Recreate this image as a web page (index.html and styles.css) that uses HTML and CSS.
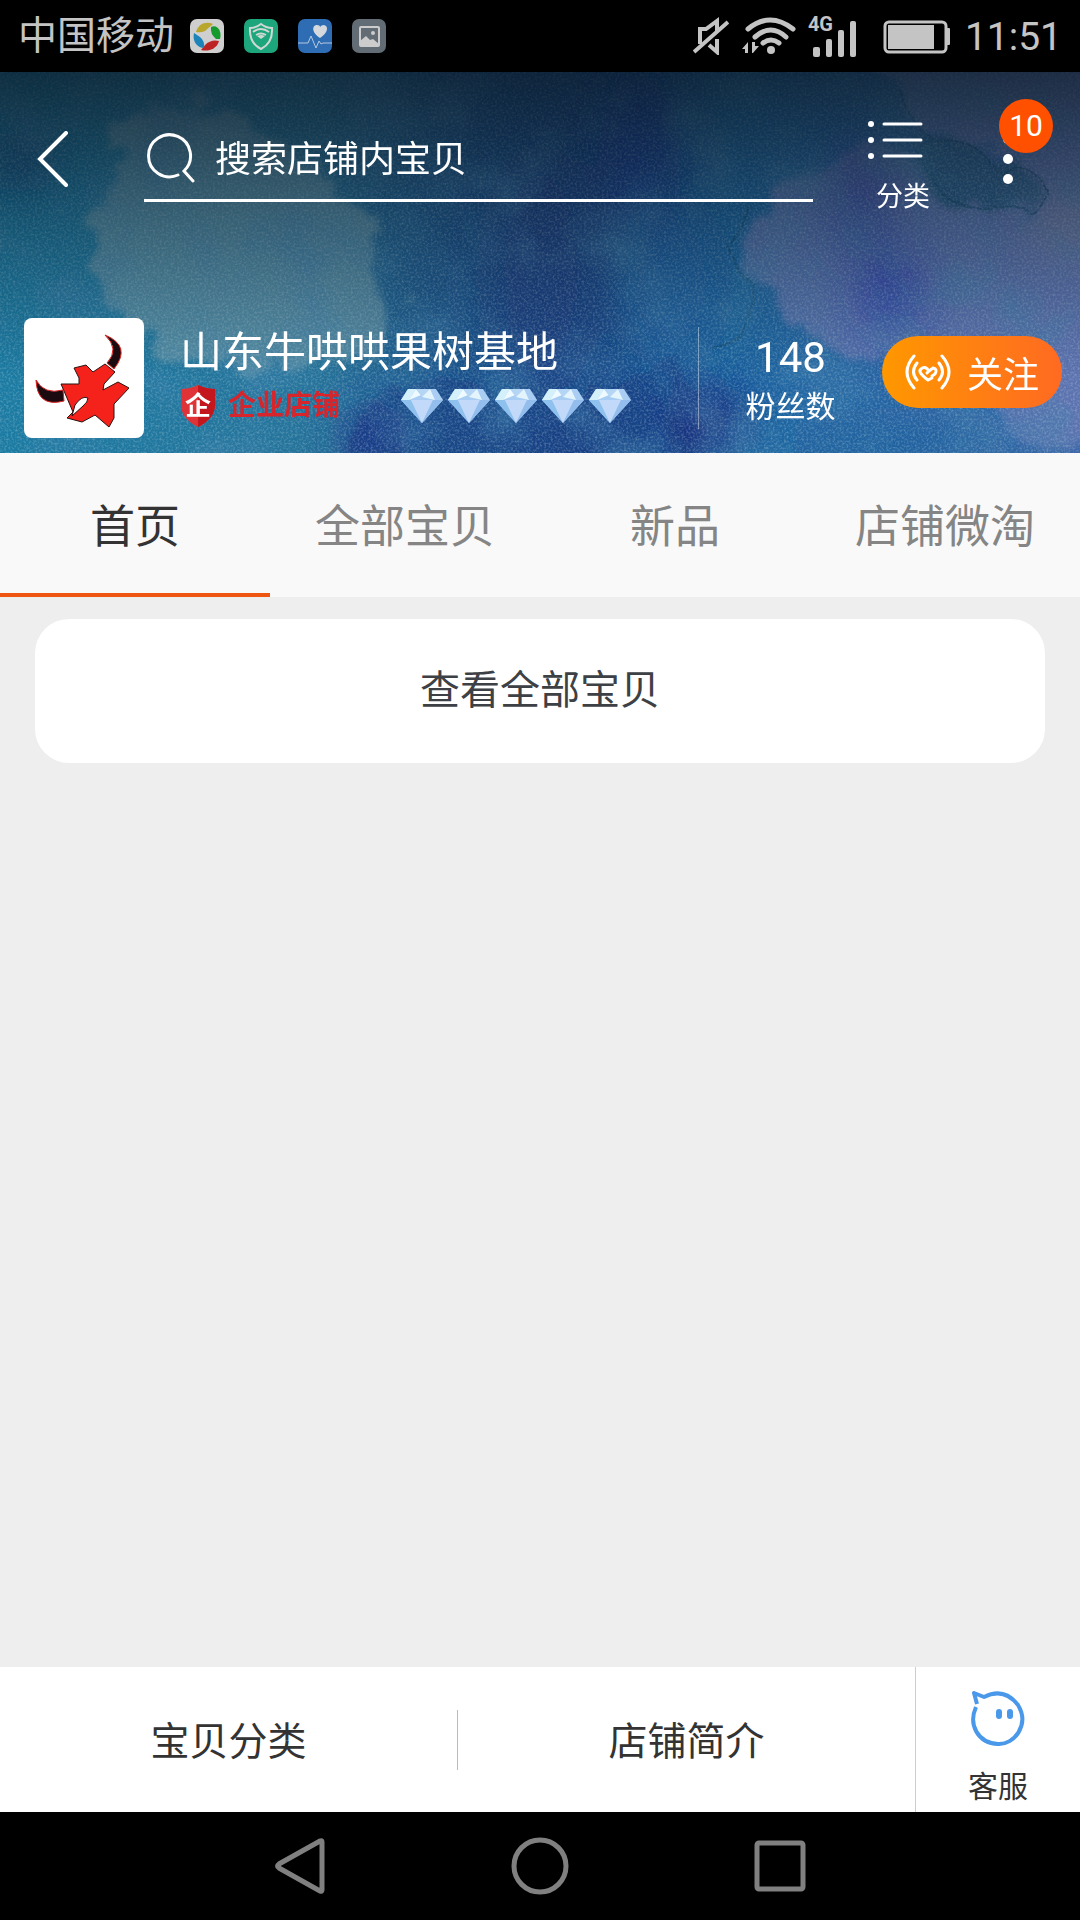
FILE: index.html
```html
<!DOCTYPE html>
<html lang="zh-CN">

<head>
    <meta charset="UTF-8" />
    <meta name="viewport" content="width=device-width, initial-scale=1.0" />
    <title>山东牛哄哄果树基地</title>
    <link rel="stylesheet" href="styles.css">
</head>

<body>
    <!-- status bar -->
    <div class="status">
        <span class="carrier">中国移动</span>
        <div class="apps">
            <svg viewBox="0 0 34 34">
                <rect width="34" height="34" rx="7" fill="#cfcfcf" />
                <path d="M6 13C8 5 16 2 23 5L15 12Q11 14 6 13Z" fill="#b9a62c" />
                <path d="M21 8C28 5 32 13 30 20L26 20Q20 15 21 8Z" fill="#159a2c" />
                <path d="M29 22C27 30 18 33 11 31L16 25Q22 20 29 22Z" fill="#bd2323" />
                <path d="M4 14C2 22 7 29 14 29Q15 22 10 18Z" fill="#1d84ba" />
            </svg>
            <svg viewBox="0 0 34 34">
                <rect width="34" height="34" rx="7" fill="#1da67b" />
                <path d="M17 5Q22 9 28 9Q29 24 17 30Q5 24 6 9Q12 9 17 5Z" fill="none" stroke="#d0d8d4" stroke-width="2" />
                <path d="M9 13Q17 7 25 13M12 16Q17 13 22 16" fill="none" stroke="#d0d8d4" stroke-width="2" />
                <path d="M13 17Q17 15 21 17L17 20Z" fill="#d0d8d4" />
            </svg>
            <svg viewBox="0 0 34 34">
                <rect width="34" height="34" rx="7" fill="#2e6db4" />
                <path d="M22 19C12 12 15 6 19 6Q22 6 22 8Q23 6 26 6C31 7 30 14 22 19Z" fill="#d5d9de" />
                <path d="M0 24H10L13 17L18 29L21 22L23 25L25 24H34" fill="none" stroke="#b5c8e0" stroke-width="1" />
            </svg>
            <svg viewBox="0 0 34 34">
                <rect width="34" height="34" rx="7" fill="#626c74" />
                <rect x="8" y="8" width="19" height="19" rx="1" fill="none" stroke="#ccc" stroke-width="2" />
                <path d="M8 22L14 17L18 21L21 20L27 25V27H8Z" fill="#ccc" />
                <circle cx="21" cy="14" r="2" fill="#ccc" />
            </svg>
        </div>
        <div class="signals">
            <svg class="mute" viewBox="0 0 36 38" fill="none" stroke="#c4c4c4" stroke-width="4">
                <path d="M7 27V12H13L24 4V14M24 22V35L16 28M1 35L35 5" />
            </svg>
            <svg class="wifi" viewBox="0 0 54 38" fill="none" stroke="#c4c4c4" stroke-width="5" stroke-linecap="round">
                <path d="M6 12Q28 -6 51 12M13 20Q29 6 44 20M21 26Q29 20 37 26" />
                <circle cx="29" cy="33" r="4" fill="#c4c4c4" stroke="none" />
                <path d="M0 32L6 25V36H3V32ZM10 25H13V29H17L11 36H10Z" fill="#c4c4c4" stroke="none" />
            </svg>
            <div class="cell">
                <span>4G</span>
                <svg viewBox="0 0 50 44" fill="#c4c4c4">
                    <rect x="5" y="33" width="7" height="10" rx="2" />
                    <rect x="18" y="25" width="6" height="18" rx="2" />
                    <rect x="30" y="16" width="6" height="27" rx="2" />
                    <rect x="42" y="7" width="6" height="36" rx="2" />
                </svg>
            </div>
            <svg class="battery" viewBox="0 0 68 34" fill="#c4c4c4">
                <rect x="2" y="2" width="61" height="30" rx="4" fill="none" stroke="#c4c4c4" stroke-width="3" />
                <rect x="5" y="5" width="46" height="24" />
                <rect x="63" y="8" width="4" height="17" rx="1" />
            </svg>
            <span class="time">11:51</span>
        </div>
    </div>

    <!-- shop header -->
    <header class="banner">
        <svg class="paint" viewBox="0 0 1080 381" preserveAspectRatio="none">
            <defs>
                <linearGradient id="base" x1="0" x2="1" y1="0" y2="0">
                    <stop offset="0" stop-color="#1b7ba3" />
                    <stop offset="0.3" stop-color="#26739b" />
                    <stop offset="0.42" stop-color="#1c568f" />
                    <stop offset="0.55" stop-color="#1a4a8a" />
                    <stop offset="0.68" stop-color="#1c66a2" />
                    <stop offset="1" stop-color="#3c65a8" />
                </linearGradient>
                <linearGradient id="shade" x1="0" x2="0" y1="0" y2="1">
                    <stop offset="0" stop-color="#08141f" stop-opacity="0.75" />
                    <stop offset="0.3" stop-color="#08141f" stop-opacity="0.45" />
                    <stop offset="0.8" stop-color="#08141f" stop-opacity="0" />
                </linearGradient>
                <filter id="edge" x="-20%" y="-20%" width="140%" height="140%">
                    <feTurbulence type="fractalNoise" baseFrequency="0.03" numOctaves="5" seed="4" />
                    <feDisplacementMap in="SourceGraphic" scale="50" xChannelSelector="R" yChannelSelector="G" />
                    <feGaussianBlur stdDeviation="3" />
                </filter>
                <filter id="vein" x="-20%" y="-20%" width="140%" height="140%">
                    <feTurbulence type="fractalNoise" baseFrequency="0.03" numOctaves="3" seed="4" />
                    <feDisplacementMap in="SourceGraphic" scale="12" xChannelSelector="R" yChannelSelector="G" />
                </filter>
                <filter id="wash" x="-50%" y="-50%" width="200%" height="200%">
                    <feGaussianBlur stdDeviation="22" />
                </filter>
                <filter id="cloud" x="0" y="0" width="100%" height="100%">
                    <feTurbulence type="fractalNoise" baseFrequency="0.015" numOctaves="5" seed="12" />
                    <feColorMatrix values="0 0 0 0 0.05  0 0 0 0 0.22  0 0 0 0 0.42  2.5 0 0 0 -1.1" />
                </filter>
                <filter id="grain" x="0" y="0" width="100%" height="100%">
                    <feTurbulence type="fractalNoise" baseFrequency="0.45" numOctaves="2" seed="8" />
                    <feColorMatrix values="0 0 0 0 0.55  0 0 0 0 0.7  0 0 0 0 0.75  1.2 0 0 0 -0.5" />
                </filter>
            </defs>
            <rect width="1080" height="381" fill="url(#base)" />
            <g filter="url(#edge)">
                <path d="M125 50L200 30L260 60L320 90L345 135L378 145L375 200L400 240L390 270L290 300L190 290L120 260L90 200L100 140Z" fill="#6797aa" opacity="0.7" />
                <path d="M880 -20L900 30L950 70L1010 80L1050 130L1030 145L960 130L900 80L850 70L780 120L745 180L755 210L790 250L840 300L880 280L1000 340L1010 381L1100 381V-20Z" fill="#6e7bb5" opacity="0.65" />
                <path d="M350 350L400 315L560 330L680 290L720 400L340 400Z" fill="#1b3780" opacity="0.5" />
                <path d="M910 60L950 72L1020 90L1045 125L1030 140L960 135L925 110Z" fill="#2d6085" opacity="0.6" />
            </g>
            <g filter="url(#wash)">
                <ellipse cx="640" cy="80" rx="40" ry="80" fill="#1c2f9a" opacity="0.5" />
                <ellipse cx="540" cy="200" rx="50" ry="120" fill="#1c3c83" opacity="0.6" />
                <ellipse cx="860" cy="130" rx="30" ry="60" fill="#3340a8" opacity="0.6" />
                <ellipse cx="890" cy="220" rx="28" ry="40" fill="#2529b0" opacity="0.7" />
                <ellipse cx="710" cy="350" rx="35" ry="35" fill="#1c1b72" opacity="0.8" />
                <ellipse cx="370" cy="365" rx="30" ry="30" fill="#1f2a85" opacity="0.7" />
                <ellipse cx="670" cy="210" rx="50" ry="80" fill="#1a66a8" opacity="0.6" />
                <ellipse cx="900" cy="370" rx="120" ry="20" fill="#20609c" opacity="0.7" />
                <ellipse cx="1070" cy="150" rx="40" ry="30" fill="#8087a3" opacity="0.6" />
                <ellipse cx="20" cy="90" rx="40" ry="30" fill="#154a80" opacity="0.7" />
            </g>
            <path d="M898 20Q920 60 940 72Q980 65 1002 105Q1030 85 1046 118Q1045 145 1025 140Q1000 130 975 138Q935 120 915 78M750 135Q745 160 725 175Q735 195 755 215Q750 270 715 278" fill="none" stroke="#174e75" stroke-width="2" opacity="0.6" filter="url(#vein)" />
            <rect width="1080" height="381" filter="url(#cloud)" opacity="0.5" />
            <rect width="1080" height="381" filter="url(#grain)" opacity="0.6" />
            <rect width="1080" height="381" fill="url(#shade)" />
        </svg>

        <div class="topbar">
            <button class="back" aria-label="返回">
                <svg viewBox="0 0 32 56" fill="none" stroke="#fff" stroke-width="4" stroke-linecap="round">
                    <path d="M29 2L3 28L29 54" />
                </svg>
            </button>
            <label class="search">
                <svg viewBox="0 0 48 50" fill="none" stroke="#fff" stroke-width="3" stroke-linecap="round">
                    <path d="M31 42A21 21 0 1 1 37 38L46 48" />
                </svg>
                <input type="text" placeholder="搜索店铺内宝贝" aria-label="搜索店铺内宝贝">
            </label>
            <button class="category">
                <svg viewBox="0 0 56 40" fill="#fff">
                    <circle cx="4" cy="4" r="3" />
                    <circle cx="4" cy="20" r="3" />
                    <circle cx="4" cy="36" r="3" />
                    <path d="M17 4H54M17 20H54M17 36H54" stroke="#fff" stroke-width="3" stroke-linecap="round" />
                </svg>
                <span>分类</span>
            </button>
            <button class="more" aria-label="更多">
                <svg viewBox="0 0 12 52" fill="#fff">
                    <circle cx="6" cy="6" r="5" />
                    <circle cx="6" cy="26" r="5" />
                    <circle cx="6" cy="46" r="5" />
                </svg>
                <span class="badge">10</span>
            </button>
        </div>

        <div class="shop">
            <svg class="logo" viewBox="0 0 120 120">
                <rect width="120" height="120" rx="8" fill="#fff" />
                <path d="M37 66L55 66L55 60L50 50L62 47L69 54L81 46L91 54L80 66L79 72L94 64L105 70L90 86L90 100L85 109L71 97L58 104L43 100L49 94Z" fill="#f5221c" stroke="#2a1210" stroke-width="1" />
                <path d="M48 98L51 87Q58 77 64 80Q64 84 59 88Z" fill="#fff" stroke="#2a1210" stroke-width="1" />
                <path d="M81 17Q108 28 90 51L83 45Q96 31 81 17Z" fill="#1b0a10" stroke="#d22" stroke-width="1" />
                <path d="M12 62Q20 77 39 72L40 83Q13 90 12 62Z" fill="#1b0a10" stroke="#d22" stroke-width="1" />
            </svg>
            <div class="info">
                <h1>山东牛哄哄果树基地</h1>
                <div class="level">
                    <div class="shield">
                        <svg viewBox="0 0 36 44">
                            <path d="M18 1Q26 5 35 5V22Q34 35 18 43Q2 35 1 22V5Q10 5 18 1Z" fill="#e03338" />
                            <path d="M18 1Q26 5 35 5V22Q34 35 18 43Z" fill="#c4161d" />
                        </svg>
                        <span>企</span>
                    </div>
                    <span class="type">企业店铺</span>
                    <div class="diamonds">
                        <svg viewBox="0 0 42 34">
                            <g id="diamond">
                                <path d="M7 0H35L42 11L21 34L0 11Z" fill="#a9cdf3" />
                                <path d="M7 0H15L8 11H0Z" fill="#d3f0fb" />
                                <path d="M15 0L20 6L8 11Z" fill="#eefaff" />
                                <path d="M15 0H29L21 8Z" fill="#b4d5f3" />
                                <path d="M29 0L34 11L21 8Z" fill="#e3f4fd" />
                                <path d="M0 11H10L21 34Z" fill="#8fc1ee" />
                                <path d="M10 11H32L21 34Z" fill="#c3d9fa" />
                                <path d="M32 11H42L21 34Z" fill="#92bdec" />
                            </g>
                        </svg>
                        <svg viewBox="0 0 42 34"><use href="#diamond" /></svg>
                        <svg viewBox="0 0 42 34"><use href="#diamond" /></svg>
                        <svg viewBox="0 0 42 34"><use href="#diamond" /></svg>
                        <svg viewBox="0 0 42 34"><use href="#diamond" /></svg>
                    </div>
                </div>
            </div>
            <div class="line"></div>
            <div class="fans">
                <span class="count">148</span>
                <span class="label">粉丝数</span>
            </div>
            <button class="follow">
                <svg viewBox="0 0 46 36" fill="none" stroke="#fff" stroke-width="3" stroke-linecap="round">
                    <path d="M9 2Q-5 18 9 34M12 9Q5 18 12 26M37 2Q51 18 37 34M34 9Q41 18 34 26" />
                    <path d="M27 24L23 26Q12 18 16 15Q20 11 24 17L28 14Q33 15 30 20L27 22M24 17L22 19" />
                </svg>
                <span>关注</span>
            </button>
        </div>
    </header>

    <nav class="tabs">
        <a href="#" class="active">首页</a>
        <a href="#">全部宝贝</a>
        <a href="#">新品</a>
        <a href="#">店铺微淘</a>
    </nav>

    <main class="content">
        <a href="#" class="all">查看全部宝贝</a>
    </main>

    <footer class="bottom">
        <a href="#" class="item">宝贝分类</a>
        <div class="split"></div>
        <a href="#" class="item">店铺简介</a>
        <a href="#" class="service">
            <svg viewBox="0 0 54 56" fill="none" stroke="#4a98ea" stroke-width="4" stroke-linejoin="round">
                <path d="M6 13L3 2L13 6Q33 -4 47 14C59 34 43 54 27 53C7 52 -3 34 5 16" />
                <path d="M28 21V25M39 21V25" stroke-width="6" stroke-linecap="round" />
            </svg>
            <span>客服</span>
        </a>
    </footer>

    <!-- android keys -->
    <div class="keys">
        <button aria-label="返回键">
            <svg viewBox="0 0 58 58"><path d="M51 5V53Q51 55 49 54L8 31Q5 29 8 27L49 4Q51 3 51 5Z" /></svg>
        </button>
        <button aria-label="主屏幕">
            <svg viewBox="0 0 58 58"><circle cx="29" cy="29" r="26" /></svg>
        </button>
        <button aria-label="最近任务">
            <svg viewBox="0 0 58 58"><rect x="6" y="6" width="46" height="46" rx="2" /></svg>
        </button>
    </div>
</body>

</html>
```

FILE: styles.css
```css
* {
    box-sizing: border-box;
}

body {
    margin: 0;
    min-height: 100vh;
    display: flex;
    flex-direction: column;
    background-color: #eee;
    font-family: Roboto, "Noto Sans CJK SC", sans-serif;
}

button {
    padding: 0;
    border: none;
    background: none;
    color: white;
    font-family: inherit;
    cursor: pointer;
}

a {
    text-decoration: none;
}

svg {
    display: block;
    flex-shrink: 0;
}

/* status bar */
.status {
    height: 72px;
    padding: 0 18px;
    display: flex;
    align-items: center;
    background-color: black;
    color: #c4c4c4;
}

.carrier {
    font-size: 39px;
    line-height: 72px;
}

.apps {
    display: flex;
    gap: 20px;
    margin-left: 16px;
}

.apps svg {
    width: 34px;
    height: 34px;
}

.signals {
    display: flex;
    align-items: center;
    margin-left: auto;
}

.mute {
    width: 36px;
    height: 38px;
    margin-right: 13px;
}

.wifi {
    width: 54px;
    height: 38px;
    margin-right: 12px;
}

.cell {
    display: grid;
    margin-right: 25px;
}

.cell > * {
    grid-area: 1 / 1;
}

.cell span {
    font-size: 20px;
    font-weight: bold;
    line-height: 20px;
}

.cell svg {
    width: 50px;
    height: 44px;
}

.battery {
    width: 68px;
    height: 34px;
    margin: 2px 14px 0 0;
}

.time {
    padding-top: 2px;
    font-size: 39px;
}

/* banner */
.banner {
    position: relative;
    min-height: 381px;
    padding: 45px 0 15px;
    display: flex;
    flex-direction: column;
    justify-content: space-between;
    background-color: #1d5a8e;
    color: white;
}

.paint {
    position: absolute;
    top: 0;
    left: 0;
    width: 100%;
    height: 100%;
}

.topbar,
.shop {
    position: relative;
    display: flex;
    align-items: flex-start;
}

.topbar {
    padding: 0 66px 0 37px;
}

.back {
    width: 107px;
    height: 84px;
}

.back svg {
    width: 32px;
    height: 56px;
}

.search {
    flex: 1;
    height: 85px;
    display: flex;
    align-items: center;
    gap: 20px;
    padding-left: 3px;
    border-bottom: 3px solid white;
}

.search svg {
    width: 48px;
    height: 50px;
}

.search input {
    flex: 1;
    min-width: 0;
    padding: 3px 0 0;
    border: none;
    outline: none;
    background: none;
    color: white;
    font-family: inherit;
    font-size: 36px;
}

.search input::placeholder {
    color: white;
    opacity: 1;
}

.category {
    width: 63px;
    margin: 3px 72px 0 54px;
    display: flex;
    flex-direction: column;
    gap: 20px;
    font-size: 27px;
    line-height: 34px;
}

.category svg {
    width: 56px;
    height: 40px;
}

.category span {
    align-self: flex-end;
}

.more {
    position: relative;
    margin-top: 16px;
}

.more svg {
    width: 12px;
    height: 52px;
}

.badge {
    position: absolute;
    top: -34px;
    left: -3px;
    width: 54px;
    height: 54px;
    border-radius: 50%;
    background-color: #ff5000;
    font-size: 30px;
    line-height: 54px;
    text-align: center;
}

/* shop */
.shop {
    padding: 0 18px 0 24px;
}

.logo {
    width: 120px;
    height: 120px;
    margin-right: 36px;
}

.info {
    margin-top: 10px;
}

.info h1 {
    margin: 0 0 6px;
    font-size: 42px;
    font-weight: normal;
    line-height: 50px;
}

.level {
    display: flex;
    align-items: center;
}

.shield {
    display: grid;
    place-items: center;
    margin-right: 12px;
}

.shield > * {
    grid-area: 1 / 1;
}

.shield svg {
    width: 36px;
    height: 44px;
}

.shield span {
    position: relative;
    font-size: 26px;
    font-weight: bold;
    line-height: 36px;
}

.type {
    color: #d8242b;
    font-size: 28px;
    font-weight: bold;
    line-height: 40px;
}

.diamonds {
    display: flex;
    gap: 5px;
    margin-left: 61px;
}

.diamonds svg {
    width: 42px;
    height: 34px;
}

.line {
    width: 1px;
    height: 102px;
    margin: 9px 0 0 auto;
    background-color: rgba(255, 255, 255, 0.4);
}

.fans {
    width: 183px;
    margin-top: 15px;
    text-align: center;
}

.count {
    display: block;
    font-size: 42px;
    line-height: 50px;
}

.label {
    display: block;
    font-size: 30px;
    line-height: 48px;
}

.follow {
    width: 180px;
    height: 72px;
    margin-top: 18px;
    display: flex;
    align-items: center;
    justify-content: center;
    gap: 16px;
    border-radius: 36px;
    background: linear-gradient(to right, #ff9800, #ff6a22);
    font-size: 36px;
}

.follow svg {
    width: 46px;
    height: 36px;
}

/* tabs */
.tabs {
    height: 144px;
    display: flex;
    background-color: #f9f9f9;
}

.tabs a {
    flex: 1;
    padding-top: 3px;
    border-bottom: 4px solid transparent;
    color: #858585;
    font-size: 45px;
    line-height: 144px;
    text-align: center;
}

.tabs .active {
    border-color: #ee5511;
    color: #333;
}

.content {
    flex: 1;
    padding: 22px 35px;
}

.all {
    display: block;
    border-radius: 34px;
    background-color: white;
    color: #3d4145;
    font-size: 40px;
    line-height: 144px;
    text-align: center;
}

/* bottom bar */
.bottom {
    height: 145px;
    display: flex;
    align-items: center;
    background-color: white;
}

.item {
    flex: 1;
    padding-top: 5px;
    color: #333;
    font-size: 39px;
    line-height: 56px;
    text-align: center;
}

.split {
    width: 1px;
    height: 60px;
    background-color: #bbb;
}

.service {
    width: 165px;
    height: 100%;
    padding-top: 24px;
    display: flex;
    flex-direction: column;
    align-items: center;
    gap: 20px;
    border-left: 1px solid #ccc;
    color: #333;
    font-size: 30px;
    line-height: 40px;
}

.service svg {
    width: 54px;
    height: 56px;
}

.keys {
    height: 108px;
    display: flex;
    align-items: center;
    justify-content: center;
    gap: 182px;
    background-color: black;
}

.keys svg {
    width: 58px;
    height: 58px;
    fill: none;
    stroke: #808080;
    stroke-width: 5;
}
```
